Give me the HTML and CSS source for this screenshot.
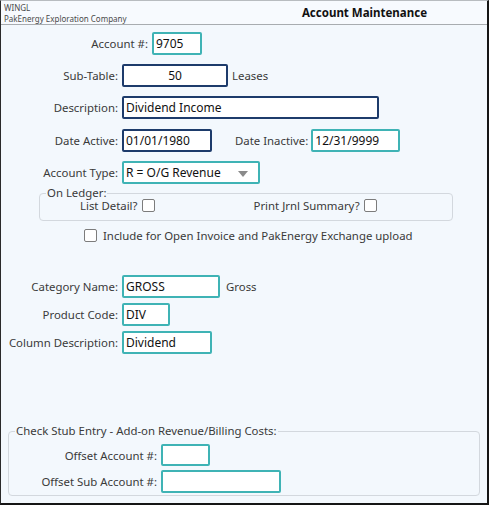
FILE: index.html
```html
<!DOCTYPE html>
<html>
<head>
<meta charset="utf-8">
<link rel="stylesheet" href="styles.css">
</head>
<body>
<div class="window">
  <div class="header">
    <div class="hdr-left">
      <div class="app">WINGL</div>
      <div class="company">PakEnergy Exploration Company</div>
    </div>
    <div class="title">Account Maintenance</div>
  </div>
  <div class="form">
    <div class="row r-acct">
      <label class="lbl w-acct">Account #:</label>
      <div class="inp teal w-49">9705</div>
    </div>
    <div class="row r-sub">
      <label class="lbl w-main">Sub-Table:</label>
      <div class="inp navy w-105 center">50</div>
      <span class="after">Leases</span>
    </div>
    <div class="row r-desc">
      <label class="lbl w-main">Description:</label>
      <div class="inp navy w-256">Dividend Income</div>
    </div>
    <div class="row r-date">
      <label class="lbl w-main">Date Active:</label>
      <div class="inp navy w-89">01/01/1980</div>
      <label class="lbl2">Date Inactive:</label>
      <div class="inp teal w-88">12/31/9999</div>
    </div>
    <div class="row r-type">
      <label class="lbl w-main">Account Type:</label>
      <div class="inp teal w-137 select">R = O/G Revenue
        <svg class="arrow" width="10" height="6" viewBox="0 0 10 6"><path d="M0 0 L10 0 L5 6 Z" fill="#8a8a8a"/></svg>
      </div>
    </div>
    <fieldset class="group ledger">
      <legend>On Ledger:</legend>
      <div class="ledger-row">
        <span class="chk-lbl l1">List Detail?</span><span class="chk"></span>
        <span class="chk-lbl l2">Print Jrnl Summary?</span><span class="chk"></span>
      </div>
    </fieldset>
    <div class="row r-include">
      <span class="chk"></span>
      <span class="inc-lbl">Include for Open Invoice and PakEnergy Exchange upload</span>
    </div>
    <div class="row r-cat">
      <label class="lbl w-main">Category Name:</label>
      <div class="inp teal w-97">GROSS</div>
      <span class="after a6">Gross</span>
    </div>
    <div class="row r-prod">
      <label class="lbl w-main">Product Code:</label>
      <div class="inp teal w-47">DIV</div>
    </div>
    <div class="row r-col">
      <label class="lbl w-main">Column Description:</label>
      <div class="inp teal w-89">Dividend</div>
    </div>
    <fieldset class="group stub">
      <legend>Check Stub Entry - Add-on Revenue/Billing Costs:</legend>
      <div class="row r-off">
        <label class="lbl w-off">Offset Account #:</label>
        <div class="inp teal w-48 h-21"></div>
      </div>
      <div class="row r-offsub">
        <label class="lbl w-off">Offset Sub Account #:</label>
        <div class="inp teal w-119"></div>
      </div>
    </fieldset>
  </div>
</div>
</body>
</html>
```
FILE: styles.css
```css
html, body {
  margin: 0;
  padding: 0;
}
body {
  font-family: "Noto Sans", "Open Sans", sans-serif;
  font-size: 11.4px;
  color: #3a3a3a;
}
.window {
  width: 489px;
  height: 505px;
  box-sizing: border-box;
  border-top: 1px solid #b8bcc0;
  border-left: 1px solid #2a2a2a;
  border-right: 2px solid #151515;
  border-bottom: 2px solid #151515;
  background: #f3f8fd;
  display: flex;
  flex-direction: column;
  overflow: hidden;
}
.header {
  height: 23px;
  background: #f7fafe;
  border-bottom: 1px solid #a8acb0;
  display: flex;
  justify-content: space-between;
  align-items: flex-start;
  flex-shrink: 0;
}
.hdr-left {
  padding-left: 3px;
  font-size: 8px;
  line-height: 11px;
  color: #4a4a4a;
  padding-top: 1px;
}
.title {
  font-weight: bold;
  font-size: 11.5px;
  color: #111;
  margin-right: 60px;
  margin-top: 4px;
}
.form {
  flex: 1;
}
.row {
  display: flex;
  align-items: center;
}
.lbl {
  text-align: right;
  flex-shrink: 0;
  padding-right: 4px;
  box-sizing: border-box;
}
.w-acct { width: 151px; }
.w-main { width: 121px; }
.w-off { width: 152px; }
.inp {
  box-sizing: border-box;
  height: 23px;
  border: 2px solid #3fb3b5;
  border-radius: 2px;
  background: #fff;
  color: #111;
  padding-left: 2px;
  display: flex;
  align-items: center;
  font-size: 12px;
  line-height: 1;
}
.inp.navy { border-color: #1d3b6b; }
.inp.center { justify-content: center; padding-left: 0; }
.h-21 { height: 22px; }
.w-47 { width: 48px; }
.w-48 { width: 49px; }
.w-49 { width: 50px; }
.w-88 { width: 89px; }
.w-89 { width: 90px; }
.w-97 { width: 98px; }
.w-105 { width: 106px; }
.w-119 { width: 120px; }
.w-137 { width: 138px; }
.w-256 { width: 257px; }
.select { position: relative; }
.arrow { position: absolute; right: 10px; top: 8px; }
.after { margin-left: 4px; }
.after.a6 { margin-left: 6px; }
.lbl2 { margin-left: 23px; margin-right: 3px; }
.r-acct { margin-top: 7px; }
.r-sub { margin-top: 9px; }
.r-desc { margin-top: 9px; }
.r-date { margin-top: 10px; }
.r-type { margin-top: 9px; }
.group {
  border: 1px solid #d3d8de;
  border-radius: 4px;
  margin: 0;
  padding: 0;
}
.group legend {
  padding: 0 1px;
  margin-left: 6px;
  color: #3a3a3a;
  line-height: 12px;
}
.ledger {
  margin: 3px 34px 0 38px;
  height: 34px;
  box-sizing: border-box;
}
.ledger-row {
  display: flex;
  align-items: center;
  margin-top: -1px;
}
.chk {
  width: 13px;
  height: 13px;
  box-sizing: border-box;
  border: 1px solid #7c7c7c;
  border-radius: 2px;
  background: #fff;
  flex-shrink: 0;
}
.chk-lbl { margin-right: 4px; }
.l1 { margin-left: 40px; }
.l2 { margin-left: 99px; }
.r-include { margin-top: 7px; padding-left: 83px; }
.inc-lbl { margin-left: 6px; }
.r-cat { margin-top: 32px; }
.r-prod { margin-top: 5px; }
.r-col { margin-top: 5px; }
.stub {
  margin: 71px 7px 0 7px;
  height: 71px;
  box-sizing: border-box;
}
.r-off { margin-top: 7px; }
.r-offsub { margin-top: 4px; }
```
